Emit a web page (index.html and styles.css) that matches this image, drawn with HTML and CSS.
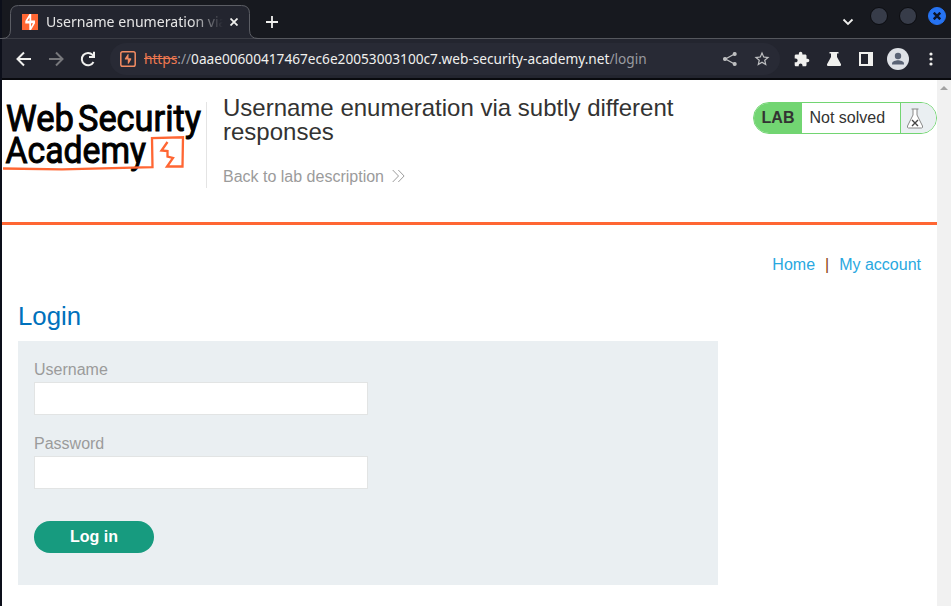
FILE: index.html
```html
<!DOCTYPE html>
<html lang="en">
<head>
<meta charset="utf-8">
<title>Username enumeration via subtly different responses</title>
<link rel="stylesheet" href="styles.css">
</head>
<body>
<div class="window">
  <div class="tabstrip">
    <svg class="tab-shape" width="260" height="39" viewBox="0 0 260 39"><path d="M0 38.5H2Q10.500 38.500 10.500 30V13.500Q10.500 5.500 18.500 5.500H241.500Q249.500 5.500 249.500 13.500V30Q249.500 38.500 258 38.500H260"/></svg>
    <div class="tab">
      <svg class="favicon" width="16" height="16" viewBox="0 0 16 16"><rect width="16" height="16" fill="#ff6633"/><path d="M7.500 0H9.200V6.600H13V9.300L9 16H7.300V9.400H3.300V6.900z" fill="#fff"/><path d="M7.500 3.500V6.700H5.300zM9 9.300H11L9 12.800z" fill="#ff6633"/></svg>
      <span class="tab-title">Username enumeration via subtly</span>
      <svg class="tab-close" width="8" height="8" viewBox="0 0 8 8"><path d="M.5.5l7 7M7.500.5l-7 7"/></svg>
    </div>
    <svg class="new-tab" width="12" height="12" viewBox="0 0 12 12"><path d="M6 0v12M0 6h12"/></svg>
    <div class="window-buttons">
      <svg class="chevron" width="12" height="8" viewBox="0 0 12 8"><path d="M1.500 1.500L6 6l4.500-4.500"/></svg>
      <span class="dot"></span>
      <span class="dot"></span>
      <span class="dot dot-close"><svg width="8" height="8" viewBox="0 0 8 8"><path d="M.7.7l6.600 6.600M7.300.7L.7 7.300"/></svg></span>
    </div>
  </div>

  <div class="toolbar">
    <div class="nav">
      <span class="cell"><svg class="line" width="16" height="16" viewBox="0 0 16 16"><path d="M15 8H2M8 1.500L1.500 8 8 14.500"/></svg></span>
      <span class="cell"><svg class="line dim" width="16" height="16" viewBox="0 0 16 16"><path d="M1 8h13M8 1.500L14.500 8 8 14.500"/></svg></span>
      <span class="cell"><svg class="line" width="16" height="16" viewBox="0 0 16 16"><path d="M13.500 11A6.200 6.200 0 1 1 12.600 3.900L14 5.500M14 .8V6H9"/></svg></span>
    </div>
    <div class="omnibox">
      <svg class="site-icon" width="16" height="16" viewBox="0 0 16 16"><rect x=".8" y=".8" width="14.400" height="14.400" rx="1.800"/><path class="bolt" d="M8.500 3V7.200H11.200V8.400L8.600 12.800H7.800V8.600H4.900V7.400L7.900 3z"/></svg>
      <span class="url"><s>https</s><i>://</i><b>0aae00600417467ec6e20053003100c7.web-security-academy.net</b><i>/login</i></span>
      <span class="cell"><svg class="outline" width="16" height="16" viewBox="0 0 16 16"><path d="M12.500 3L3.500 8l9 5"/><circle cx="12.700" cy="3" r="1.400"/><circle cx="3" cy="8" r="1.400"/><circle cx="12.700" cy="13" r="1.400"/></svg></span>
      <span class="cell"><svg class="fill soft" width="18" height="18" viewBox="0 0 24 24"><path d="M22 9.240l-7.190-.62L12 2 9.190 8.630 2 9.240l5.460 4.730L5.820 21 12 17.270 18.180 21l-1.630-7.030L22 9.240zM12 15.400l-3.760 2.270 1-4.280-3.320-2.880 4.380-.38L12 6.100l1.710 4.040 4.380.38-3.320 2.880 1 4.280L12 15.400z"/></svg></span>
    </div>
    <div class="actions">
      <span class="cell"><svg class="fill" width="16" height="16" viewBox="1 0 23 23"><path d="M20.500 11H19V7c0-1.100-.9-2-2-2h-4V3.500C13 2.120 11.880 1 10.500 1S8 2.120 8 3.500V5H4c-1.100 0-1.990.9-1.990 2v3.800H3.500c1.490 0 2.700 1.210 2.700 2.700s-1.210 2.700-2.700 2.700H2V20c0 1.100.9 2 2 2h3.800v-1.500c0-1.490 1.210-2.700 2.700-2.700s2.700 1.210 2.700 2.700V22H17c1.100 0 2-.9 2-2v-4h1.500c1.380 0 2.500-1.120 2.500-2.500S21.880 11 20.500 11z"/></svg></span>
      <span class="cell"><svg class="fill" width="16" height="16" viewBox="0 0 16 16"><path d="M3.500 1h9v1.500H11v3.500l4 7.200Q15.500 15 14 15H2Q.5 15 1 13.200L5 6V2.500H3.500z"/></svg></span>
      <span class="cell"><svg class="fill" width="14" height="14" viewBox="0 0 14 14"><path fill-rule="evenodd" d="M0 0h14v14H0zM2 2v10h7V2z"/></svg></span>
      <span class="cell"><svg width="22" height="22" viewBox="0 0 22 22"><circle cx="11" cy="11" r="11" fill="#dee1e6"/><circle cx="11" cy="8" r="3.200" fill="#5a6375"/><path d="M5 16.500V15.500C5 13.200 9 12.200 11 12.200S17 13.200 17 15.500V16.500z" fill="#5a6375"/></svg></span>
      <span class="cell last"><svg class="fill" width="4" height="14" viewBox="0 0 4 14"><circle cx="2" cy="2" r="1.600"/><circle cx="2" cy="7" r="1.600"/><circle cx="2" cy="12" r="1.600"/></svg></span>
    </div>
  </div>

  <div class="viewport">
    <main class="page">
      <header class="lab-header">
        <svg class="logo" width="204" height="80" viewBox="0 0 204 80">
          <g class="logo-text">
            <text x="4" y="31" textLength="68" lengthAdjust="spacingAndGlyphs">Web</text>
            <text x="76" y="31" textLength="123" lengthAdjust="spacingAndGlyphs">Security</text>
            <text x="3.500" y="63" textLength="140.500" lengthAdjust="spacingAndGlyphs">Academy</text>
          </g>
          <path class="logo-line" d="M1 68.500L60 69.300L150.500 67.200L150 38L181 37.300L180.500 66.500H165L171 58L165.500 56.500V51L159.500 50.500L165.500 42"/>
        </svg>
        <div class="heading">
          <h1>Username enumeration via subtly different responses</h1>
          <a class="back">Back to lab description <svg width="13" height="14" viewBox="0 0 13 14"><path d="M.7 1L6.500 7 .7 13M6.300 1l5.800 6-5.800 6"/></svg></a>
        </div>
        <div class="status">
          <b>LAB</b><span>Not solved</span>
          <i><svg width="18" height="21" viewBox="0 0 18 21"><path d="M5.500 1h7M7 1v6L1.500 18Q1 20 2.500 20h13Q17 20 16.500 18L11 7V1"/><path class="x" d="M6 12l6 6M12 12l-6 6"/></svg></i>
        </div>
      </header>
      <nav class="links"><a>Home</a><span>|</span><a>My account</a></nav>
      <h2>Login</h2>
      <form class="login">
        <label for="u">Username</label><input id="u">
        <label for="p">Password</label><input id="p" type="password">
        <button type="button">Log in</button>
      </form>
    </main>
    <div class="scrollbar"><span></span></div>
  </div>
</div>
</body>
</html>
```

FILE: styles.css
```css
* { box-sizing: border-box; }
body { margin: 0; overflow: hidden; font-family: "Liberation Sans", Arial, sans-serif; }
svg { display: block; flex: none; }
.window { width: 951px; height: 606px; border-left: 2px solid #0c0f1a; display: flex; flex-direction: column; }

.tabstrip { position: relative; height: 39px; flex: none; display: flex; background: #17191f; border-bottom: 1px solid #55575d; font-family: "Noto Sans", sans-serif; }
.tab-shape { position: absolute; left: -2px; top: 0; }
.tab-shape path { fill: #23252f; stroke: #5b5d64; }
.tab { position: relative; width: 248px; height: 32px; margin-top: 6px; padding: 0 11px 0 20px; display: flex; align-items: center; }
.tab-title { width: 177px; margin: -2px 0 0 8px; overflow: hidden; white-space: nowrap; font-size: 14.1px; color: #e6e6e6; -webkit-mask-image: linear-gradient(90deg, #000 145px, transparent 177px); mask-image: linear-gradient(90deg, #000 145px, transparent 177px); }
.tab-close { margin-left: 7px; }
.tab-close path, .new-tab path { fill: none; stroke: #f0f0ee; stroke-width: 1.8; }
.new-tab { margin: 16px 0 0 16px; }
.window-buttons { margin-left: auto; height: 32px; padding-right: 5px; display: flex; align-items: center; gap: 11px; }
.chevron { margin: 11px 5px 0 0; }
.chevron path { fill: none; stroke: #f0f0ee; stroke-width: 1.8; }
.dot { width: 18px; height: 18px; border-radius: 50%; background: #373c49; border: 1px solid #0b0c10; }
.dot-close { background: #2673f2; border-color: #2673f2; display: flex; align-items: center; justify-content: center; }
.dot-close path { stroke: #0c1428; stroke-width: 2.5; }

.toolbar { height: 41px; flex: none; display: flex; align-items: center; background: #23252f; border-bottom: 2px solid #090a0e; }
.nav, .actions { display: flex; }
.nav { padding-left: 6px; }
.actions { padding-left: 6px; }
.cell { width: 32px; height: 32px; display: flex; align-items: center; justify-content: center; flex: none; }
.last { padding-left: 1px; }
.line { fill: none; stroke: #f0f0ee; stroke-width: 2; }
.dim { stroke: #77787c; }
.fill { fill: #f0f0ee; }
.soft { fill: #bfc0c2; }
.outline { fill: #bfc0c2; stroke: #bfc0c2; stroke-width: 1.3; }
.outline path { fill: none; }
.omnibox { width: 670px; height: 32px; margin-left: 6px; padding: 0 2px 0 10px; border-radius: 16px; background: #282a35; display: flex; align-items: center; }
.site-icon { fill: none; stroke: #f28b62; stroke-width: 1.5; }
.bolt { fill: #f28b62; stroke: none; }
.url { flex: 1; margin-left: 8px; white-space: nowrap; font: 13.67px "Noto Sans", sans-serif; color: #9a9ba0; }
.url s { color: #ee7850; }
.url b { font-weight: 400; color: #f0f0ee; }
.url i { font-style: normal; }

.viewport { flex: 1; display: flex; min-height: 0; background: #fff; }
.page { width: 935px; }
.scrollbar { width: 14px; background: #f1f1f1; padding: 6px 3px; }
.scrollbar span { display: block; border: 4px solid transparent; border-top: 0; border-bottom: 4px solid #a3a3a3; }
.lab-header { height: 145px; padding-top: 20px; border-bottom: 3px solid #ff6633; display: flex; align-items: flex-start; }
.logo { width: 204px; height: 80px; overflow: visible; }
.logo-text { font: 400 37.5px Roboto, sans-serif; fill: #000; stroke: #000; stroke-width: 1; }
.logo-line { fill: none; stroke: #ff6633; stroke-width: 2.3; }
.heading { width: 531px; height: 86px; margin-top: 2px; padding: 0 40px 0 16px; border-left: 1px solid #e4e4e4; }
h1 { margin: -6px 0 0; font-weight: 400; font-size: 24px; line-height: 24px; color: #333332; }
.back { display: flex; align-items: center; gap: 8px; margin-top: 23px; font-size: 16px; line-height: 20px; color: #9b9b9b; }
.back svg { margin-top: -2px; }
.back path { fill: none; stroke: #9b9b9b; }
.status { margin-top: 2px; width: 184px; height: 32px; margin-left: 16px; border: 1px solid #72d572; border-radius: 16px; overflow: hidden; display: flex; line-height: 30px; font-size: 16px; color: #333332; }
.status b { width: 48px; background: #72d572; text-align: center; }
.status span { width: 98px; padding-left: 7.5px; }
.status i { flex: 1; border-left: 1px solid #72d572; background: #eaeff2; display: flex; align-items: center; padding-left: 5px; }
.status path { fill: #fff; stroke: #888; }
.status .x { stroke: #444; stroke-width: 1.4; }
.links { display: flex; justify-content: flex-end; gap: 10px; padding: 30px 16px 0 0; font-size: 16px; line-height: 20px; color: #29a8df; }
.links span { color: #8b3d0e; }
h2 { margin: 26px 0 0 16px; font-weight: 400; font-size: 25.8px; line-height: 30px; color: #0071bc; }
.login { width: 700px; height: 244px; margin: 10px 0 0 16px; padding: 19px 16px; background: #eaeff2; display: flex; flex-direction: column; align-items: flex-start; }
.login label { font-size: 16px; line-height: 20px; color: #9b9b9b; }
.login input { width: 334px; height: 33px; margin: 2px 0 19px; border: 1px solid #e2e4e4; background: #fff; }
.login button { width: 120px; height: 32px; margin-top: 13px; padding: 0; border: 0; border-radius: 16px; background: #179b7f; color: #fff; font: 700 16px "Liberation Sans", Arial, sans-serif; }
```
